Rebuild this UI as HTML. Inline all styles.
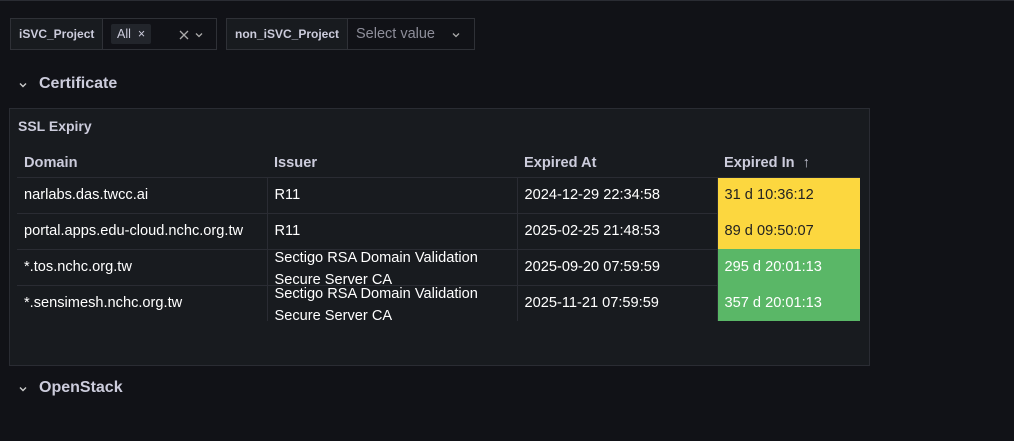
<!DOCTYPE html>
<html><head><style>
*{box-sizing:border-box;margin:0;padding:0}
body{width:1014px;height:441px;background:#111217;font-family:"Liberation Sans",sans-serif;color:#ccccdc;position:relative;overflow:hidden;border-top:1px solid #2a2c33}
.a{position:absolute}
.box{position:absolute;top:17px;height:32px;border:1px solid #2f3137;display:flex;font-size:12px}
.lbl{background:#181b1f;color:#ccccdc;font-weight:bold;padding:0 8px;display:flex;align-items:center;border-right:1px solid #2f3137}
.val{display:flex;align-items:center;padding:0 8px;position:relative}
.chip{background:#22252b;padding:3px 6px;border-radius:2px;color:#ccccdc;font-size:12.5px}
.sec{font-size:16px;font-weight:bold;color:#ccccdc}
.panel{left:9px;top:107px;width:861px;height:258px;background:#181b1f;border:1px solid #2a2c33}
table{position:absolute;left:7px;top:40px;border-collapse:collapse;font-size:14.6px;color:#fff;table-layout:fixed}
th{font-weight:bold;color:#ccccdc;text-align:left;height:28px;padding:0 0 0 7px;font-size:14.6px;border-bottom:1px solid #2a2c33}
td{height:36px;padding:0 0 0 7px;border-bottom:1px solid #2a2c33;border-right:1px solid #2a2c33;line-height:22px;white-space:nowrap}
td.t div{height:34px;line-height:22px;position:relative;top:-3px}
tr:last-child td{border-bottom:none}
td.y{background:#fcd73f;color:#222;border:none}
td.g{background:#5ab767;color:#fff;border:none}
svg{position:absolute}
</style></head><body>
<div class="box" style="left:10px;width:207px"><div class="lbl" style="width:92px">iSVC_Project</div><div class="val" style="flex:1"><span class="chip">All&nbsp; ×</span>
<svg style="left:76px;top:11px" width="10" height="10" viewBox="0 0 10 10"><path d="M1 1L9 9M9 1L1 9" stroke="#aaa" stroke-width="1.3"/></svg>
<svg style="left:92px;top:13px" width="8" height="6" viewBox="0 0 8 6"><path d="M1 1.5L4 4.5L7 1.5" stroke="#aaa" stroke-width="1.3" fill="none"/></svg></div></div>
<div class="box" style="left:226px;width:249px"><div class="lbl" style="width:121px">non_iSVC_Project</div><div class="val" style="flex:1;color:#8e8e9a;font-size:14.5px">Select value
<svg style="left:104px;top:13px" width="8" height="6" viewBox="0 0 8 6"><path d="M1 1.5L4 4.5L7 1.5" stroke="#aaa" stroke-width="1.3" fill="none"/></svg></div></div>
<svg style="left:19px;top:81px" width="8" height="6" viewBox="0 0 8 6"><path d="M1 1.5L4 4.5L7 1.5" stroke="#ccc" stroke-width="1.4" fill="none"/></svg>
<div class="a sec" style="left:39px;top:74px">Certificate</div>
<div class="a panel">
<div class="a" style="left:8px;top:9px;font-size:14px;font-weight:bold;color:#ccccdc">SSL Expiry</div>
<table>
<colgroup><col style="width:250px"><col style="width:250px"><col style="width:200px"><col style="width:143px"></colgroup>
<tr><th>Domain</th><th>Issuer</th><th>Expired At</th><th>Expired In &nbsp;↑</th></tr>
<tr><td>narlabs.das.twcc.ai</td><td>R11</td><td>2024-12-29 22:34:58</td><td class="y">31 d 10:36:12</td></tr>
<tr><td>portal.apps.edu-cloud.nchc.org.tw</td><td>R11</td><td>2025-02-25 21:48:53</td><td class="y">89 d 09:50:07</td></tr>
<tr><td>*.tos.nchc.org.tw</td><td class="t"><div>Sectigo RSA Domain Validation<br>Secure Server CA</div></td><td>2025-09-20 07:59:59</td><td class="g">295 d 20:01:13</td></tr>
<tr><td>*.sensimesh.nchc.org.tw</td><td class="t"><div>Sectigo RSA Domain Validation<br>Secure Server CA</div></td><td>2025-11-21 07:59:59</td><td class="g">357 d 20:01:13</td></tr>
</table>
</div>
<svg style="left:19px;top:385px" width="8" height="6" viewBox="0 0 8 6"><path d="M1 1.5L4 4.5L7 1.5" stroke="#ccc" stroke-width="1.4" fill="none"/></svg>
<div class="a sec" style="left:39px;top:378px">OpenStack</div>
</body></html>
